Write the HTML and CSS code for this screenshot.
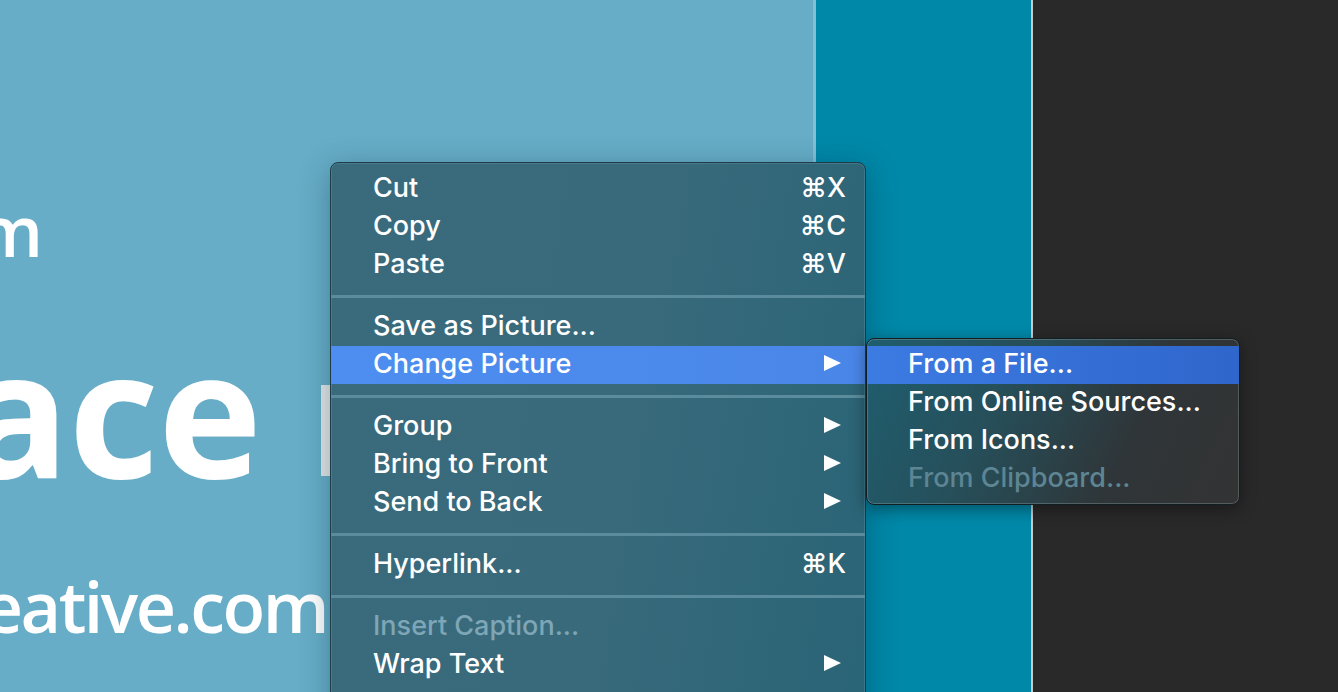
FILE: index.html
```html
<!DOCTYPE html>
<html>
<head>
<meta charset="utf-8">
<link rel="stylesheet" href="styles.css">
</head>
<body>
<div class="canvas">
  <div class="slide">
    <span class="st st-m">m</span>
    <span class="st st-ace">ace</span>
    <span class="st-bar"></span>
    <span class="st st-url">eative.com</span>
  </div>
  <div class="edge-light"></div>
  <div class="teal"></div>
  <div class="edge-grey"></div>
  <div class="dark"></div>
</div>

<div class="menu">
  <div class="row"><span class="label">Cut</span><span class="key">⌘X</span></div>
  <div class="row"><span class="label">Copy</span><span class="key">⌘C</span></div>
  <div class="row"><span class="label">Paste</span><span class="key">⌘V</span></div>
  <div class="sep"></div>
  <div class="row"><span class="label">Save as Picture...</span></div>
  <div class="row active"><span class="label">Change Picture</span><span class="arrow"></span></div>
  <div class="sep"></div>
  <div class="row"><span class="label">Group</span><span class="arrow"></span></div>
  <div class="row"><span class="label">Bring to Front</span><span class="arrow"></span></div>
  <div class="row"><span class="label">Send to Back</span><span class="arrow"></span></div>
  <div class="sep"></div>
  <div class="row"><span class="label">Hyperlink...</span><span class="key">⌘K</span></div>
  <div class="sep"></div>
  <div class="row disabled"><span class="label">Insert Caption...</span></div>
  <div class="row"><span class="label">Wrap Text</span><span class="arrow"></span></div>
</div>

<div class="submenu">
  <div class="row active"><span class="label">From a File...</span></div>
  <div class="row"><span class="label">From Online Sources...</span></div>
  <div class="row"><span class="label">From Icons...</span></div>
  <div class="row disabled"><span class="label">From Clipboard...</span></div>
</div>
</body>
</html>
```

FILE: styles.css
```css
html, body {
  margin: 0;
  padding: 0;
}
body {
  width: 1338px;
  height: 692px;
  overflow: hidden;
  position: relative;
  font-family: "Inter", "Noto Sans", sans-serif;
}
.canvas {
  display: flex;
  height: 692px;
}
.slide {
  width: 813px;
  background: #67adc7;
  position: relative;
  overflow: hidden;
}
.st {
  position: absolute;
  color: #ffffff;
  font-family: "Open Sans", sans-serif;
  line-height: 1;
  white-space: nowrap;
}
.st-m {
  right: calc(100% - 43px);
  top: 195px;
  font-size: 70px;
  font-weight: 600;
}
.st-ace {
  right: calc(100% - 261px);
  top: 322px;
  font-size: 176px;
  font-weight: 700;
  letter-spacing: -1px;
}
.st-bar {
  position: absolute;
  left: 321px;
  top: 385px;
  width: 10px;
  height: 91px;
  background: #e4e7e8;
}
.st-url {
  right: calc(100% - 327px);
  top: 571px;
  font-size: 70px;
  font-weight: 600;
  letter-spacing: -2.5px;
}
.edge-light {
  width: 3px;
  background: #84c0d5;
}
.teal {
  width: 215px;
  background: #0088a8;
}
.edge-grey {
  width: 2px;
  background: #c9c9c9;
}
.dark {
  flex: 1;
  background: #292929;
}

.menu {
  position: absolute;
  left: 330px;
  top: 162px;
  width: 536px;
  height: 560px;
  padding-top: 7px;
  box-sizing: border-box;
  border: 1px solid #1d3c47;
  border-radius: 8px;
  background: linear-gradient(100deg, #3a6b7d 0%, #386a7b 55%, #296476 100%);
  box-shadow: 0 0 0 1px rgba(120,170,190,0.25) inset, 0 6px 30px rgba(0,40,60,0.35);
}
.row {
  height: 38px;
  box-sizing: border-box;
  display: flex;
  align-items: center;
  padding: 0 19px 4px 42px;
  color: #ffffff;
  font-size: 27px;
  font-weight: 500;
  letter-spacing: 0;
}
.label {
  flex: 1;
  white-space: nowrap;
}
.arrow {
  width: 0;
  height: 0;
  border-top: 8.5px solid transparent;
  border-bottom: 8.5px solid transparent;
  border-left: 17px solid #ffffff;
  margin-right: 5px;
}
.row.active {
  background: linear-gradient(90deg, #4d8ef0 0%, #4a86e8 100%);
}
.row.disabled {
  color: #7ea6b6;
}
.sep {
  height: 24px;
  display: flex;
  align-items: center;
}
.sep::before {
  content: "";
  display: block;
  width: 100%;
  height: 3px;
  background: #5a8c9d;
}

.submenu {
  position: absolute;
  left: 866px;
  top: 338px;
  width: 374px;
  height: 167px;
  box-sizing: border-box;
  padding-top: 7px;
  border: 1px solid #111e22;
  border-radius: 8px;
  background: linear-gradient(115deg, #1f5e6f 0%, #264f5a 35%, #2f3538 70%, #333333 100%);
  box-shadow: 0 0 0 1px rgba(150,170,175,0.35) inset, 0 4px 16px rgba(0,0,0,0.4);
}
.submenu .row {
  padding-left: 41px;
}
.submenu .row.active {
  background: linear-gradient(90deg, #3c7be2 0%, #2f66cc 100%);
}
.submenu .row.disabled {
  color: #5d8593;
}
```
